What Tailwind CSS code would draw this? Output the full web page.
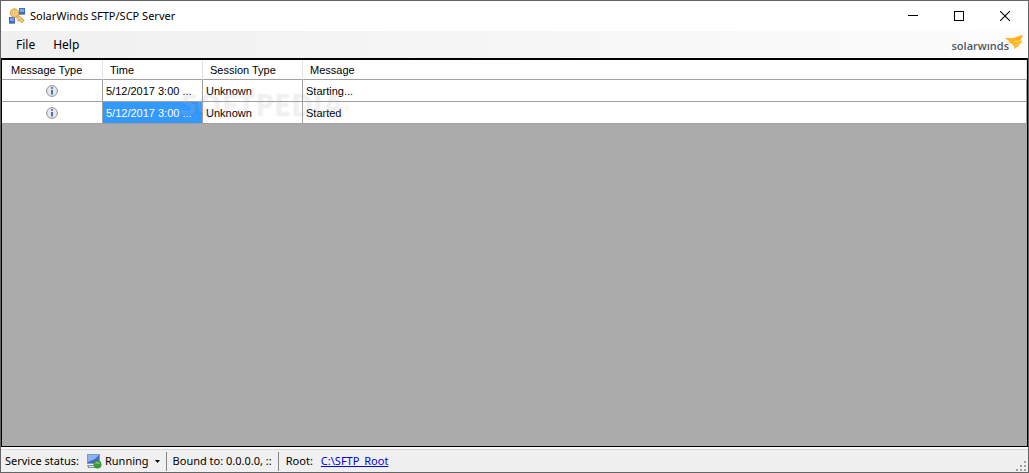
<!DOCTYPE html>
<html lang="en">
<head>
<meta charset="utf-8">
<title>SolarWinds SFTP/SCP Server</title>
<script src="https://cdn.jsdelivr.net/npm/@tailwindcss/browser@4"></script>
</head>
<body class="h-screen overflow-hidden">
<div class="flex h-full flex-col border border-[#646464] bg-[#f0f0f0] font-['Noto_Sans','Open_Sans',sans-serif] text-[11px] leading-4 text-black">
  <header class="flex h-[30px] shrink-0 items-center bg-white pl-2">
    <svg class="h-4 w-4 shrink-0" viewBox="0 0 16 16" aria-hidden="true">
      <rect x="10" y="0" width="6" height="6.500" fill="#3f6bc4"/><rect x="11" y="1" width="4" height="3" fill="#7ba5ee"/><path d="M10 6.500h6" stroke="#8a97ae"/>
      <rect x="0" y="9" width="6" height="6.500" fill="#3f6bc4"/><rect x="1" y="10" width="4" height="3" fill="#7ba5ee"/><path d="M0 15.500h6" stroke="#8a97ae"/>
      <path d="M7 7 14.500 13.500M10.500 10l-2 2.500M13 12l-1.500 2" stroke="#d39c45" stroke-width="3"/>
      <path d="M7 7 14 13M10.500 10l-2 2M12.500 12l-1 1.500" stroke="#f7cf7b" stroke-width="1.500"/>
      <circle cx="5.500" cy="5" r="4.200" fill="#f6cb74" stroke="#d39c45"/><circle cx="4.500" cy="4" r="1.200" fill="#fff" stroke="#b98336" stroke-width=".5"/>
    </svg>
    <h1 class="ml-[5px] flex-1 whitespace-nowrap">SolarWinds SFTP/SCP Server</h1>
    <button aria-label="Minimize" class="grid h-full w-[46px] place-items-center"><svg width="10" height="10" shape-rendering="crispEdges"><path d="M0 4.500h10" stroke="#000"/></svg></button>
    <button aria-label="Maximize" class="grid h-full w-[46px] place-items-center"><svg width="10" height="10" shape-rendering="crispEdges"><rect x=".5" y=".5" width="9" height="9" fill="none" stroke="#000"/></svg></button>
    <button aria-label="Close" class="grid h-full w-[46px] place-items-center"><svg width="10" height="10"><path d="M0 0l10 10M10 0L0 10" stroke="#000" stroke-width="1.100"/></svg></button>
  </header>
  <nav class="flex h-[27px] shrink-0 items-center bg-linear-to-r from-[#f0f0f0] to-[#fcfcfc] pr-[5px] pl-[15px] text-[12px]">
    <button class="mr-[18px]">File</button>
    <button>Help</button>
    <div class="ml-auto flex items-start" role="img" aria-label="solarwinds">
      <span class="mt-[3px] font-['Open_Sans',sans-serif] text-[11px] font-semibold text-[#4c5860]">solarwınds</span>
      <svg class="-ml-1 h-[15px] w-[18px]" viewBox="0 0 18 15"><path fill="#fdb61c" d="M0 3.500C3 2 5 3.500 8 3 11 2.500 14 .5 17.500 0 17.500 3 16.500 4.800 14.500 5.600L17.500 5.500C16.800 8 15.500 9 13.500 9.200L15 9.400C14 11.500 11.500 11.500 9.500 14.500 9.800 11.500 8.500 10 7 9L2.500 7 5 6.500Z"/><path d="M9 6.500c3 .3 5-.2 7.500-1.500M10 9.700c2 .2 3 0 5-.8" fill="none" stroke="#fff" stroke-width=".4"/></svg>
    </div>
  </nav>
  <main class="relative min-h-0 flex-1 border border-t-2 border-black bg-[#ababab] font-['Liberation_Sans',Arial,sans-serif] leading-[14px]">
    <table class="w-full table-fixed border-separate border-spacing-0 bg-white">
      <colgroup><col class="w-[101px]"><col class="w-[100px]"><col class="w-[100px]"><col></colgroup>
      <thead>
        <tr class="h-5 text-left [&>th]:border-r [&>th]:border-b [&>th]:border-r-[#e2e2e2] [&>th]:border-b-[#a0a0a0] [&>th]:px-[7px] [&>th]:font-normal [&>th]:whitespace-nowrap">
          <th scope="col"><span class="pl-[2px]">Message Type</span></th><th scope="col">Time</th><th scope="col">Session Type</th><th scope="col">Message</th>
        </tr>
      </thead>
      <tbody class="[&_td]:h-[22px] [&_td]:border-r [&_td]:border-b [&_td]:border-[#a0a0a0] [&_td]:px-[3px] [&_td]:whitespace-nowrap">
        <tr>
          <td><svg class="mx-auto h-3 w-3" viewBox="0 0 12 12" role="img" aria-label="Information"><circle cx="6" cy="6" r="5.400" fill="#e8e8e8" stroke="#929292"/><path d="M6 5v4.500" stroke="#3763c8" stroke-width="1.800"/><circle cx="6" cy="3" r="1" fill="#3763c8"/></svg></td>
          <td>5/12/2017 3:00 ...</td><td>Unknown</td><td>Starting...</td>
        </tr>
        <tr>
          <td><svg class="mx-auto h-3 w-3" viewBox="0 0 12 12" role="img" aria-label="Information"><circle cx="6" cy="6" r="5.400" fill="#e8e8e8" stroke="#929292"/><path d="M6 5v4.500" stroke="#3763c8" stroke-width="1.800"/><circle cx="6" cy="3" r="1" fill="#3763c8"/></svg></td>
          <td class="bg-[#3399ff] text-white">5/12/2017 3:00 ...</td><td>Unknown</td><td>Started</td>
        </tr>
      </tbody>
    </table>
    <div class="pointer-events-none absolute top-[29px] left-[178px] font-['Open_Sans',sans-serif] text-[30px] leading-[30px] font-bold whitespace-nowrap text-white/15 [text-shadow:1px_1px_2px_rgb(0_0_0/0.07)]" aria-hidden="true">SOFTPEDIA<sup class="text-[8px]">®</sup></div>
  </main>
  <footer class="flex h-[25px] shrink-0 flex-col whitespace-nowrap">
    <div class="h-[2px] shrink-0 bg-[#fcfcfc]"></div>
    <div class="flex flex-1 items-center border-t border-[#d7d7d7] pl-1">
      <span>Service status:</span>
      <button class="ml-[8px] flex items-center">
        <svg class="mr-[3px] h-[15px] w-[15px]" viewBox="0 0 15 15" aria-hidden="true"><rect x=".5" y=".5" width="12" height="9" fill="#4169c4" stroke="#8298bf"/><path d="M1 1h11L8 5 1 8z" fill="#8cb2f5"/><path d="M0 11h10v3H1z" fill="#8192ad"/><path d="M2 12.500h5" stroke="#dce4ee"/><circle cx="10.500" cy="10.500" r="4" fill="#399b35"/><path d="M8 10c1-2.500 4-2.500 5 0-2-1-3-1-5 0" fill="#a6dc92"/></svg>
        <span>Running</span>
        <svg class="ml-[6px] h-[3px] w-[5px]" viewBox="0 0 5 3" aria-hidden="true"><path d="M0 0h5L2.500 3z"/></svg>
      </button>
      <span class="ml-[6px] h-[19px] w-px bg-[#858585]"></span>
      <span class="ml-[6px]">Bound to: 0.0.0.0, ::</span>
      <span class="ml-[6px] h-[19px] w-px bg-[#858585]"></span>
      <span class="ml-[7px]">Root:</span>
      <a href="#root" class="ml-2 text-[#0000f0] underline">C:\SFTP_Root</a>
      <svg class="mr-[2px] mb-px ml-auto h-[10px] w-[10px] self-end" viewBox="0 0 10 10" aria-hidden="true"><path d="M8 0h2v2H8zM4 4h2v2H4zM8 4h2v2H8zM0 8h2v2H0zM4 8h2v2H4zM8 8h2v2H8z" fill="#a0a0a0"/></svg>
    </div>
  </footer>
</div>
</body>
</html>
